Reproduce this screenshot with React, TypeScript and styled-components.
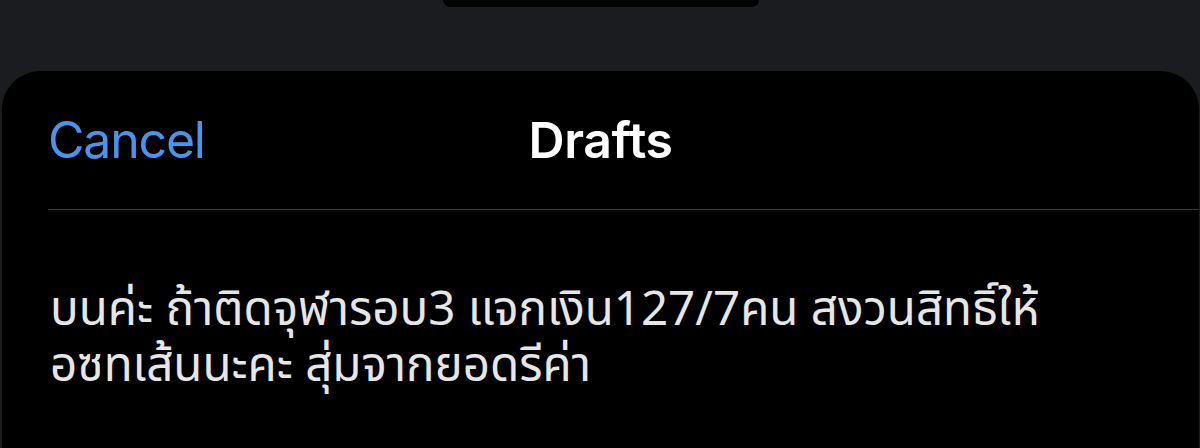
import * as React from "react";
import styled, { createGlobalStyle } from "styled-components";

const GlobalStyle = createGlobalStyle`
  html, body {
    margin: 0;
    padding: 0;
    background: #1b1c1f;
    height: 100%;
    overflow: hidden;
  }
  #root {
    height: 100%;
  }
`;

const Screen = styled.div`
  display: flex;
  flex-direction: column;
  height: 448px;
  background: #1b1c1f;
`;

const Island = styled.div`
  align-self: center;
  width: 316px;
  height: 7px;
  margin-left: 2px;
  background: #000;
  border-radius: 0 0 22px 22px;
`;

const Sheet = styled.div`
  flex: 1;
  margin: 64px 1px 0 2px;
  background: #000;
  border-radius: 38px 38px 0 0;
  display: flex;
  flex-direction: column;
`;

const NavBar = styled.div`
  position: relative;
  height: 138px;
  display: flex;
  align-items: center;
  justify-content: center;
  margin-left: 46px;
  border-bottom: 1.5px solid #3a3a3d;
`;

const CancelButton = styled.button`
  position: absolute;
  left: 0;
  top: 50%;
  transform: translateY(-50%);
  padding: 0;
  border: 0;
  background: none;
  color: #4a93ee;
  font-family: Inter, "Liberation Sans", sans-serif;
  font-size: 50px;
  font-weight: 400;
  letter-spacing: -1.2px;
  cursor: pointer;
`;

const Title = styled.h1`
  margin: 0 0 0 -46px;
  color: #fff;
  font-family: Inter, "Liberation Sans", sans-serif;
  font-size: 50px;
  font-weight: 600;
  letter-spacing: -0.4px;
`;

const DraftText = styled.p`
  margin: 0;
  padding: 73px 0 0 48px;
  color: #e6e6e6;
  font-family: "Noto Sans Thai", "Noto Sans", sans-serif;
  font-size: 47.5px;
  line-height: 56px;
  white-space: nowrap;
`;

export default function App() {
  return (
    <>
      <GlobalStyle />
      <Screen>
        <Island />
        <Sheet>
          <NavBar>
            <CancelButton>Cancel</CancelButton>
            <Title>Drafts</Title>
          </NavBar>
          <DraftText>
            บนค่ะ ถ้าติดจุฬารอบ3 แจกเงิน127/7คน สงวนสิทธิ์ให้
            <br />
            อซทเส้นนะคะ สุ่มจากยอดรีค่า
          </DraftText>
        </Sheet>
      </Screen>
    </>
  );
}
